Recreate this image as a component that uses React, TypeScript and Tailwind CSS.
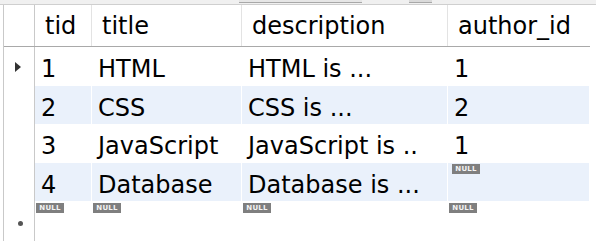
import React from "react";

const COLS = ["tid", "title", "description", "author_id"];

const ROWS: (string | null)[][] = [
  ["1", "HTML", "HTML is ...", "1"],
  ["2", "CSS", "CSS is ...", "2"],
  ["3", "JavaScript", "JavaScript is ..", "1"],
  ["4", "Database", "Database is ...", null],
];

const WIDTHS = ["w-[57px]", "w-[150px]", "w-[206px]", "w-[142px]"];
const HEIGHTS = ["h-[39px]", "h-[38px]", "h-[39px]", "h-[38px]"];

function NullBadge() {
  return (
    <span className="inline-flex items-center justify-center h-[10px] w-[28px] bg-[#7f7f7f] text-[#f4f4f4] text-[7px] font-bold leading-none tracking-[0.2px] font-['DejaVu_Sans',sans-serif]">
      NULL
    </span>
  );
}

function Indicator({ kind }: { kind?: "current" | "new" }) {
  return (
    <div className="w-[31px] shrink-0 border-r border-[#c9c9c9] flex items-center pl-[11px]">
      {kind === "current" && (
        <svg width="6" height="10" viewBox="0 0 6 10">
          <path d="M0 0 L6 5 L0 10 Z" fill="#333" />
        </svg>
      )}
      {kind === "new" && <span className="ml-[3px] mt-[4px] w-[5px] h-[5px] rounded-full bg-[#555]" />}
    </div>
  );
}

export default function App() {
  return (
    <div className="w-[596px] h-[249px] bg-white overflow-hidden font-['DejaVu_Sans',sans-serif] text-black">
      {/* top strip */}
      <div className="h-[5px] bg-[#f0f0f0] border-b border-[#cfcfcf] relative">
        <div className="absolute left-[239px] top-0 w-[123px] h-[3px] bg-[#e6e6e6] border-b border-[#a8a8a8]" />
        <div className="absolute left-[409px] top-0 w-[23px] h-[3px] bg-[#dadada] border-b border-[#a8a8a8]" />
      </div>

      <div className="ml-[3px] border-l border-[#c9c9c9] w-[587px]">
        {/* header */}
        <div className="flex h-[42px] border-b border-[#a9a9a9]">
          <div className="w-[31px] shrink-0 border-r border-[#c9c9c9]" />
          {COLS.map((c, i) => (
            <div
              key={c}
              className={`${WIDTHS[i]} shrink-0 flex items-center pl-[10px] text-[24px] ${i < 3 ? "border-r border-[#e3e3e3]" : ""}`}
            >
              {c}
            </div>
          ))}
        </div>

        {ROWS.map((r, ri) => (
          <div key={ri} className={`flex ${HEIGHTS[ri]}`}>
            <Indicator kind={ri === 0 ? "current" : undefined} />
            {r.map((v, ci) => (
              <div
                key={ci}
                className={`${WIDTHS[ci]} shrink-0 border-r border-white ${ri % 2 === 1 ? "bg-[#eaf1fb]" : "bg-white"} ${v === null ? "flex items-start pl-[4px] pt-px" : "flex items-center pl-[6px] pt-[5px] text-[24px] whitespace-nowrap overflow-hidden"}`}
              >
                {v === null ? <NullBadge /> : v}
              </div>
            ))}
          </div>
        ))}

        {/* new row */}
        <div className="flex h-[40px]">
          <Indicator kind="new" />
          {COLS.map((c, ci) => (
            <div key={c} className={`${WIDTHS[ci]} shrink-0 flex items-start pl-[1px] pt-[2px]`}>
              <NullBadge />
            </div>
          ))}
        </div>
      </div>
    </div>
  );
}
